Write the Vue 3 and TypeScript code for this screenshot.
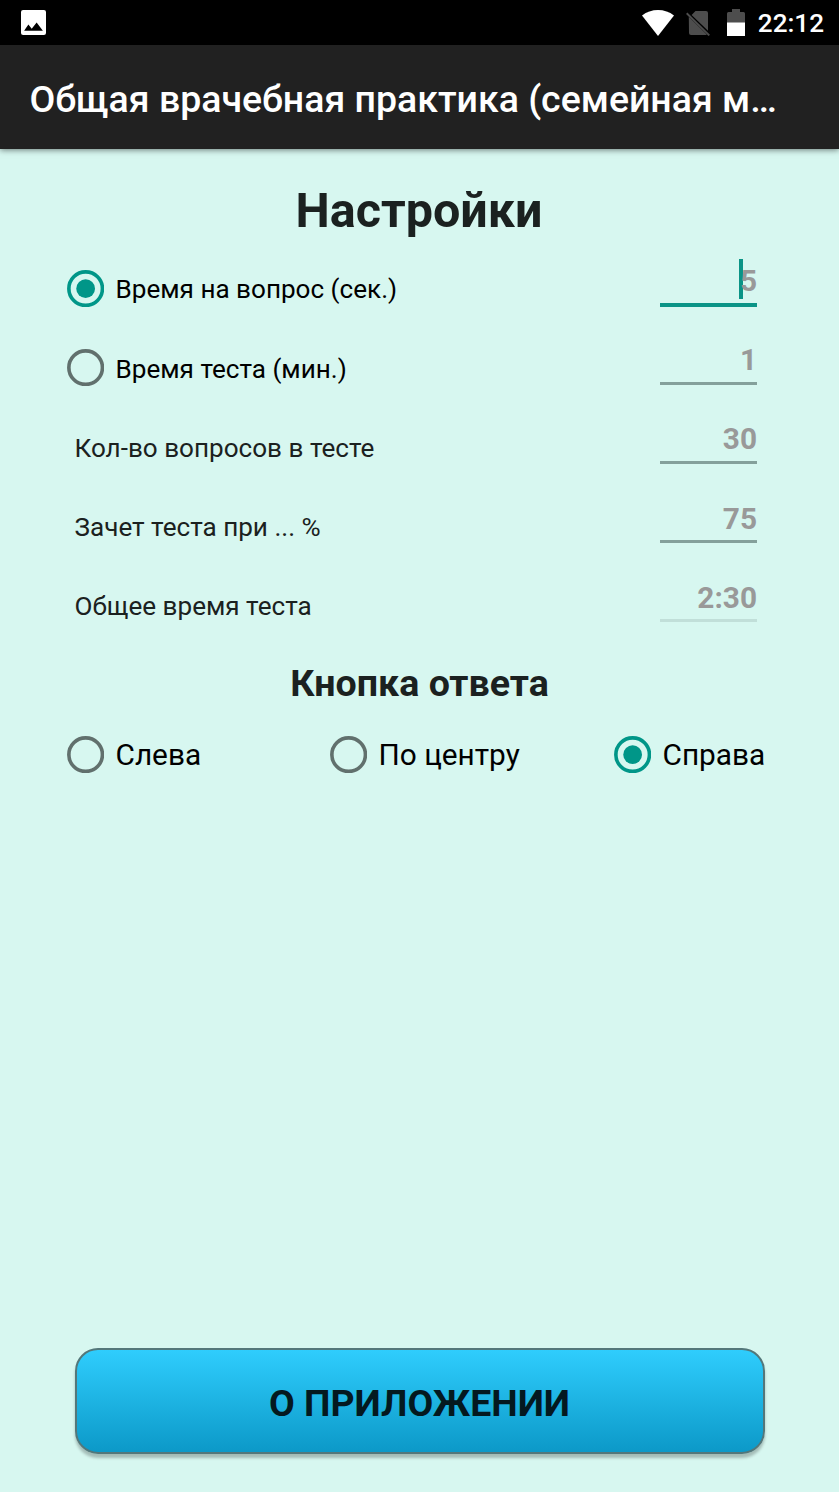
<script setup lang="ts">
import { ref } from 'vue'

interface Row {
  id: string
  label: string
  value: string
  radio: boolean
  disabled?: boolean
}

const rows: Row[] = [
  { id: 'question', label: 'Время на вопрос (сек.)', value: '5', radio: true },
  { id: 'test', label: 'Время теста (мин.)', value: '1', radio: true },
  { id: 'count', label: 'Кол-во вопросов в тесте', value: '30', radio: false },
  { id: 'pass', label: 'Зачет теста при ... %', value: '75', radio: false },
  { id: 'total', label: 'Общее время теста', value: '2:30', radio: false, disabled: true },
]
const positions = [
  { id: 'left', label: 'Слева' },
  { id: 'center', label: 'По центру' },
  { id: 'right', label: 'Справа' },
]

const mode = ref('question')
const focused = ref('question')
const position = ref('right')
</script>

<template>
  <div class="screen">
    <div class="status">
      <svg class="picture" viewBox="0 0 24 24">
        <path fill="#fff" fill-rule="evenodd" d="M2 0h20a2 2 0 0 1 2 2v20a2 2 0 0 1-2 2H2a2 2 0 0 1-2-2V2a2 2 0 0 1 2-2zM3 20h18l-6-8-4.700 6-3.200-4z" />
      </svg>
      <div class="tray">
        <svg class="wifi" viewBox="0 0 32 26">
          <path fill="#fff" d="M0 5.500Q7 0 16 0t16 5.500L16 26z" />
        </svg>
        <svg class="sim" viewBox="0 0 24 26">
          <path fill="#4d4d4d" d="M9.500 1H20a2 2 0 0 1 2 2v17.700L5.600 4.900zM2.800 6.700 20.800 24.600q-.400.400-.800.400H5a2 2 0 0 1-2-2z" />
          <path stroke="#4d4d4d" stroke-width="1.900" d="M.700 3.200 23.300 25.400" />
        </svg>
        <svg class="battery" viewBox="0 0 18 27">
          <path fill="#4d4d4d" d="M5 0h8v3h3.500Q18 3 18 4.500V14H0V4.500Q0 3 1.500 3H5z" />
          <path fill="#fff" d="M0 13.500h18V27H0z" />
        </svg>
        <span class="clock">22:12</span>
      </div>
    </div>

    <header class="bar">Общая врачебная практика (семейная м…</header>

    <main class="content">
      <h1 class="title">Настройки</h1>

      <div v-for="row in rows" :key="row.id" class="row">
        <div v-if="row.radio" class="option" @click="mode = row.id">
          <svg class="radio" :class="{ on: mode === row.id }" viewBox="0 0 37 37">
            <circle class="ring" cx="18.500" cy="18.500" r="16.650" />
            <circle v-if="mode === row.id" class="dot" cx="18.500" cy="18.500" r="9.300" />
          </svg>
          <span class="label">{{ row.label }}</span>
        </div>
        <span v-else class="label plain">{{ row.label }}</span>
        <div
          class="field"
          :class="{ focus: focused === row.id, disabled: row.disabled }"
          @click="!row.disabled && (focused = row.id)"
        >
          <span v-if="focused === row.id" class="caret"></span>
          <span class="value">{{ row.value }}</span>
        </div>
      </div>

      <h2 class="subtitle">Кнопка ответа</h2>

      <div class="positions">
        <div v-for="p in positions" :key="p.id" class="option big" @click="position = p.id">
          <svg class="radio" :class="{ on: position === p.id }" viewBox="0 0 37 37">
            <circle class="ring" cx="18.500" cy="18.500" r="16.650" />
            <circle v-if="position === p.id" class="dot" cx="18.500" cy="18.500" r="9.300" />
          </svg>
          <span class="label">{{ p.label }}</span>
        </div>
      </div>

      <button class="about">О ПРИЛОЖЕНИИ</button>
    </main>
  </div>
</template>

<style>
body {
  background: #d7f7f0;
}
</style>

<style scoped>
.screen {
  width: 839px;
  height: 1492px;
  display: flex;
  flex-direction: column;
  overflow: hidden;
  background: #d7f7f0;
  font-family: Roboto, "Noto Sans", sans-serif;
}
.status {
  height: 45px;
  flex: none;
  box-sizing: border-box;
  padding: 0 15px 0 21px;
  display: flex;
  align-items: center;
  justify-content: space-between;
  background: #000;
}
.picture {
  width: 25px;
  height: 25px;
}
.tray {
  display: flex;
  align-items: center;
}
.wifi {
  width: 32px;
  height: 26px;
}
.sim {
  width: 24px;
  height: 26px;
  margin-left: 12px;
}
.battery {
  width: 18px;
  height: 27px;
  margin-left: 17px;
}
.clock {
  margin-left: 13px;
  padding-top: 2px;
  color: #fff;
  font-size: 26.100px;
  font-weight: 500;
  line-height: 43px;
}
.bar {
  height: 104px;
  flex: none;
  padding-left: 29.500px;
  background: #212121;
  color: #fff;
  font-size: 37.480px;
  font-weight: 500;
  line-height: 109px;
  white-space: nowrap;
  box-shadow: 0 1px 6px rgba(0, 0, 0, 0.5);
}
.content {
  flex: 1;
  display: flex;
  flex-direction: column;
  padding: 32px 74.500px 38px;
}
.title,
.subtitle {
  margin: 0;
  text-align: center;
  font-weight: 700;
  color: #1b2120;
}
.title {
  height: 67px;
  padding-right: 1px;
  font-size: 48.500px;
  line-height: 59px;
}
.row {
  height: 79.200px;
  display: flex;
  align-items: center;
  justify-content: space-between;
  padding-right: 7.500px;
}
.option {
  display: flex;
  align-items: center;
  padding-top: 1.600px;
  margin-left: -7.500px;
}
.radio {
  flex: none;
  width: 37.300px;
  height: 37.300px;
  margin-right: 11.200px;
}
.ring {
  fill: none;
  stroke: #61706d;
  stroke-width: 3.600;
}
.on .ring {
  stroke: #009688;
}
.dot {
  fill: #009688;
}
.label {
  font-size: 26.100px;
  line-height: 34px;
  color: #000;
  padding-top: 2px;
}
.plain {
  color: #1b2120;
  padding-top: 3.500px;
}
.field {
  position: relative;
  box-sizing: border-box;
  align-self: flex-start;
  width: 97px;
  height: 57.500px;
  padding-top: 15px;
  border-bottom: 3px solid #84a09b;
  text-align: right;
  line-height: 35px;
}
.field.focus {
  height: 59px;
  border-bottom: 4px solid #0a9486;
}
.field.disabled {
  border-bottom-color: #c1dfd9;
}
.value {
  position: relative;
  font-size: 29.800px;
  font-weight: 700;
  color: #999;
}
.caret {
  position: absolute;
  right: 14px;
  top: 11px;
  width: 4px;
  height: 40px;
  background: #0a9486;
}
.subtitle {
  height: 78px;
  font-size: 37.600px;
  line-height: 79px;
}
.positions {
  height: 64px;
  display: grid;
  grid-template-columns: 263px 284px auto;
  align-items: center;
}
.big {
  padding-top: 1px;
}
.big .label {
  padding-top: 1px;
  font-size: 29.800px;
  white-space: nowrap;
}
.about {
  margin-top: auto;
  height: 106px;
  border: 2px solid #53777a;
  border-radius: 23px;
  background: linear-gradient(#2fcdfd, #0c99c8);
  box-shadow: 0 4px 3px rgba(0, 0, 0, 0.24);
  font-family: inherit;
  font-size: 37.400px;
  font-weight: 700;
  color: #04191f;
  padding: 4px 0 0;
}
</style>
